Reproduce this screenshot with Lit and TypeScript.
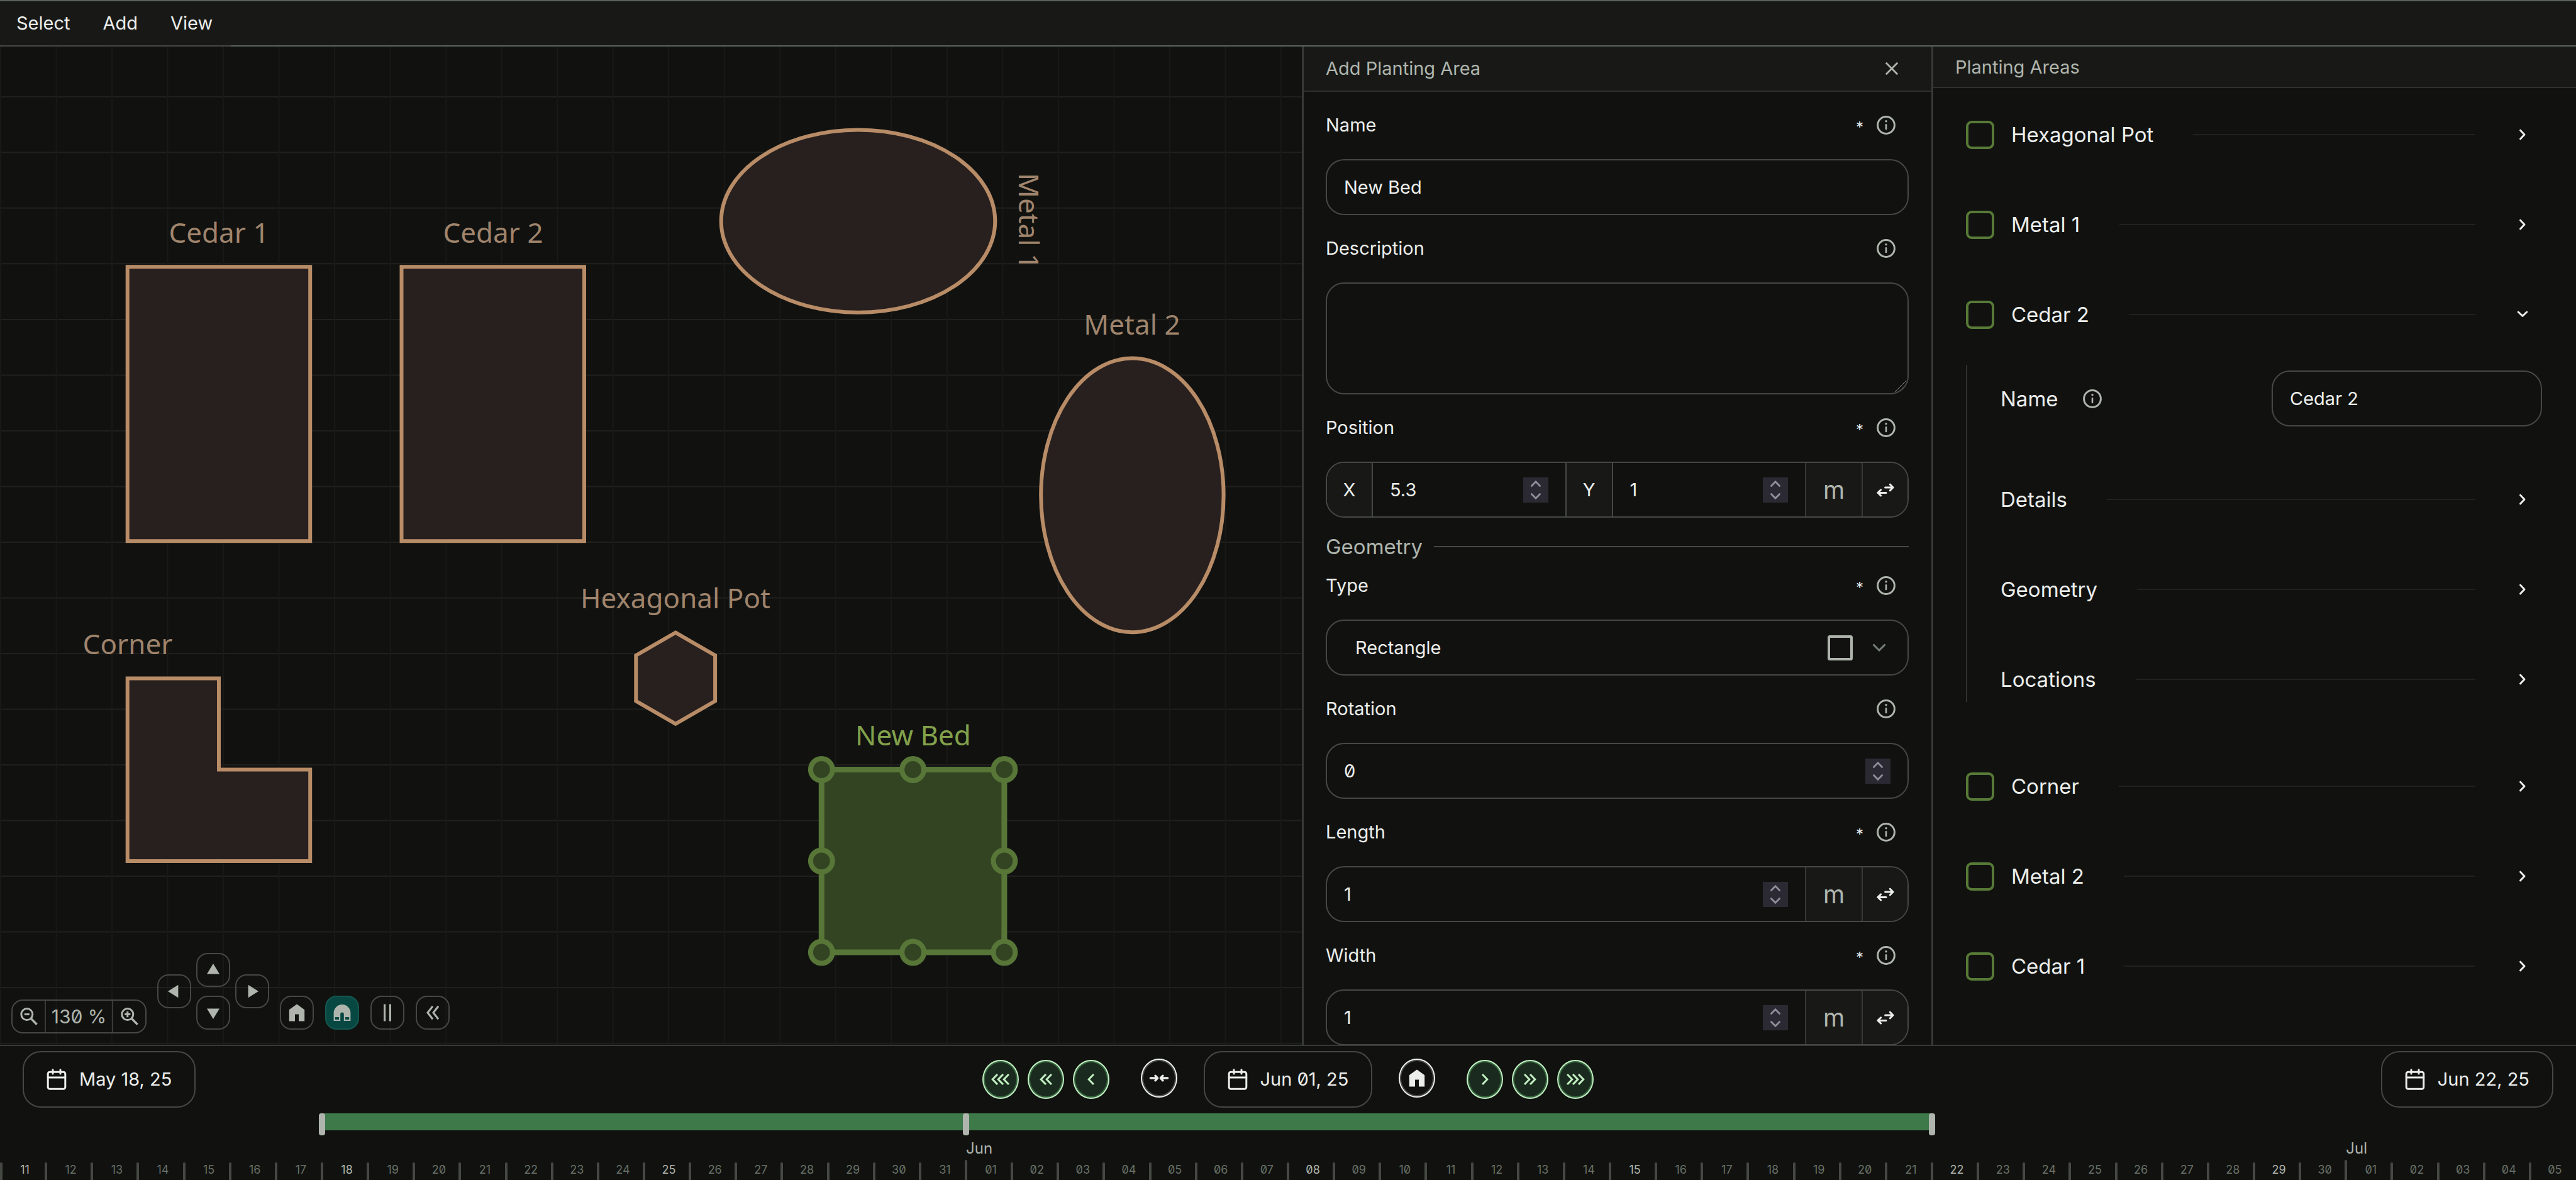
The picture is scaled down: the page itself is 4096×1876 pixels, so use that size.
import { LitElement, html, svg, css, nothing, type TemplateResult } from "lit";
import { customElement, state } from "lit/decorators.js";
import { classMap } from "lit/directives/class-map.js";

const TOTAL_DAYS = 56;
const FIRST_DAY = new Date(2025, 4, 11);
const GRID = 88.52;

/* ---------- icons ---------- */

const icon = (w: number, h: number, body: TemplateResult) => html`
  <svg class="icon" width=${w} height=${h} viewBox="0 0 ${w} ${h}" aria-hidden="true">${body}</svg>
`;

const infoIcon = icon(30, 30, svg`
  <circle cx="15" cy="15" r="13.4" fill="none" stroke="currentColor" stroke-width="3" />
  <circle cx="15" cy="8.8" r="1.7" fill="currentColor" />
  <path d="M15 14.4V21" stroke="currentColor" stroke-width="2.6" stroke-linecap="round" />
`);

const calendarIcon = icon(32, 34, svg`
  <g fill="none" stroke="currentColor" stroke-width="3" stroke-linecap="round">
    <rect x="2.2" y="5.2" width="27.6" height="27" rx="3" />
    <path d="M2.2 14H29.8M10 1.8V8M22 1.8V8" />
  </g>
`);

const homeIcon = icon(26, 28, svg`
  <path d="M13 .6L25.2 9.2V27.4H16V16.6H10V27.4H.8V9.2Z" fill="currentColor" />
`);

const magnetIcon = icon(28, 28, svg`
  <path fill="currentColor" fill-rule="evenodd"
    d="M.6 27V14.4A13.4 13.4 0 0 1 27.4 14.4V27H16.8V16.4A2.8 3 0 0 0 11.2 16.4V27Z
       M2.8 20.9V25H9V20.9ZM19 20.9V25H25.2V20.9Z" />
`);

const pauseIcon = icon(14, 28, svg`
  <path d="M1 .5H4.2V27.5H1ZM9.8 .5H13V27.5H9.8Z" fill="currentColor" />
`);

const collapseIcon = icon(22, 24, svg`
  <path d="M11 1.8L3 12L11 22.2M20 1.8L12 12L20 22.2" fill="none" stroke="currentColor" stroke-width="3" />
`);

const triangleIcons = {
  up: icon(22, 22, svg`<path d="M11 1L21 17.6H1Z" fill="currentColor" />`),
  down: icon(22, 22, svg`<path d="M1 4.4H21L11 21Z" fill="currentColor" />`),
  left: icon(22, 22, svg`<path d="M1 11L17.4 .8V21.2Z" fill="currentColor" />`),
  right: icon(22, 22, svg`<path d="M21 11L4.6 .8V21.2Z" fill="currentColor" />`),
};

const zoomIcon = (plus: boolean) => icon(28, 28, svg`
  <g fill="none" stroke="currentColor">
    <circle cx="10.8" cy="10.6" r="9" stroke-width="3" />
    <path d="M17 17L26.6 26.8" stroke-width="3.4" />
    <path d=${plus ? "M6.2 10.6H15.4M10.8 6V15.2" : "M6.8 10.6H14.8"} stroke-width="3" />
  </g>
`);

const chevronIcon = icon(36, 36, svg`
  <path d="M14.6 11.2L21 18L14.6 24.8" fill="none" stroke="currentColor" stroke-width="3" stroke-linecap="round" stroke-linejoin="round" />
`);

const chevronOpenIcon = icon(36, 36, svg`
  <path d="M11.2 14L18 20.4L24.8 14" fill="none" stroke="currentColor" stroke-width="3" stroke-linecap="round" stroke-linejoin="round" />
`);

const selectChevron = icon(22, 14, svg`
  <path d="M2.4 2.4L11 11L19.6 2.4" fill="none" stroke="#767d74" stroke-width="3" stroke-linecap="round" />
`);

const squareIcon = icon(40, 40, svg`
  <rect x="2" y="2" width="36" height="36" rx="1.5" fill="none" stroke="currentColor" stroke-width="4" />
`);

const closeIcon = icon(22, 22, svg`
  <path d="M1.8 1.8L20.2 20.2M20.2 1.8L1.8 20.2" fill="none" stroke="currentColor" stroke-width="2.8" />
`);

const swapIcon = icon(28, 22, svg`
  <g fill="none" stroke="currentColor" stroke-width="3" stroke-linecap="round" stroke-linejoin="round">
    <path d="M13.6 7H26M21.4 2.2L26 7L21.4 11.8" />
    <path d="M15 15.4H2M6.6 10.8L2 15.4L6.6 20" />
  </g>
`);

const shrinkIcon = icon(32, 14, svg`
  <g fill="none" stroke="currentColor" stroke-width="3.4" stroke-linecap="round" stroke-linejoin="round">
    <path d="M2.4 7H13.6M10 3.2L13.6 7L10 10.8" />
    <path d="M29.6 7H18.4M22 3.2L18.4 7L22 10.8" />
  </g>
`);

/** One to three stacked chevrons, used by the date stepping buttons. */
const stepIcon = (count: number, direction: "back" | "forward") => {
  const width = 11 + (count - 1) * 9;
  const paths = Array.from({ length: count }, (_, i) => {
    const x = i * 9;
    return direction === "back"
      ? svg`<path d="M${x + 10} 1L${x + 2.2} 9L${x + 10} 17" />`
      : svg`<path d="M${x + 1} 1L${x + 8.8} 9L${x + 1} 17" />`;
  });
  return icon(width, 18, svg`<g fill="none" stroke="currentColor" stroke-width="3">${paths}</g>`);
};

/* ---------- data ---------- */

interface AreaRow {
  id: string;
  name: string;
}

const AREAS: AreaRow[] = [
  { id: "hexagonal-pot", name: "Hexagonal Pot" },
  { id: "metal-1", name: "Metal 1" },
  { id: "cedar-2", name: "Cedar 2" },
  { id: "corner", name: "Corner" },
  { id: "metal-2", name: "Metal 2" },
  { id: "cedar-1", name: "Cedar 1" },
];

const DAYS = Array.from({ length: TOTAL_DAYS }, (_, i) => {
  const date = new Date(FIRST_DAY);
  date.setDate(FIRST_DAY.getDate() + i);
  const monthStart = date.getDate() === 1;
  return {
    index: i,
    label: String(date.getDate()).padStart(2, "0"),
    month: monthStart ? date.toLocaleString("en-US", { month: "short" }) : "",
    weekStart: date.getDay() === 0 && !monthStart,
  };
});

@customElement("app-root")
export class AppRoot extends LitElement {
  @state() private openArea = "cedar-2";

  static styles = css`
    :host {
      --bg: #111210;
      --bar: #181917;
      --line-faint: #212220;
      --line: #383a36;
      --line-strong: #454843;
      --muted: #afb5ad;
      --text: #eceeec;
      display: block;
      color: var(--text);
      background: var(--bg);
      font-family: Inter, "Liberation Sans", sans-serif;
      font-feature-settings: "zero";
      font-size: 29px;
      line-height: 36px;
    }
    * { box-sizing: border-box; }
    button, input, select, textarea {
      font: inherit;
      font-feature-settings: inherit;
      color: inherit;
      background: none;
      border: 0;
      margin: 0;
      padding: 0;
      outline: none;
      appearance: none;
      min-width: 0;
    }
    button { display: flex; align-items: center; justify-content: center; cursor: pointer; }
    h2, ul { margin: 0; padding: 0; font-weight: 400; font-size: inherit; list-style: none; }
    .icon { display: block; flex: none; }

    .app {
      display: grid;
      grid-template-rows: auto minmax(0, 1fr) auto;
      height: 100vh;
      overflow: hidden;
    }

    /* menu bar */
    .menubar { display: flex; height: 74px; background: var(--bar); border-top: 2px solid #5c625b; }
    .menus { display: flex; padding-right: 3px; border-bottom: 2px solid var(--line-strong); }
    .menus button { padding: 0 26px; }
    .menubar-rest { flex: 1; border-bottom: 2px solid #5c625b; }

    /* main columns */
    .main { display: grid; grid-template-columns: 2070fr 1001fr 1025fr; min-height: 0; }
    .canvas { position: relative; overflow: hidden; min-width: 0; }
    .scene { display: block; width: 100%; height: 100%; }
    .grid-x { stroke: #20211f; stroke-width: 2; }
    .grid-y { stroke: #191a18; stroke-width: 2; }
    .bed { fill: #28201e; stroke: #b88c67; stroke-width: 6; }
    .bed-label {
      font-family: "Noto Sans", sans-serif;
      font-size: 44px;
      fill: #b5957a;
      fill-opacity: 0.88;
      text-anchor: middle;
    }
    .draft { fill: #334423; stroke: #577637; stroke-width: 9; }
    .handle { fill: #334423; stroke: #577637; stroke-width: 8; }
    .draft-label { fill: #94b654; fill-opacity: 0.9; }

    .tools {
      position: absolute;
      left: 18px;
      bottom: 18px;
      display: flex;
      align-items: flex-end;
      gap: 17px;
      color: var(--muted);
    }
    .tool {
      width: 54px;
      height: 54px;
      border: 2px solid var(--line-strong);
      border-radius: 18px;
    }
    .zoom {
      display: flex;
      height: 54px;
      border: 2px solid var(--line-strong);
      border-radius: 18px;
      font-size: 30px;
    }
    .zoom button { width: 51px; }
    .zoom output {
      width: 109px;
      line-height: 50px;
      text-align: center;
      border: solid var(--line);
      border-width: 0 2px;
    }
    .pan { display: grid; grid-template-columns: repeat(3, 54px); gap: 14px 8px; padding-bottom: 6px; align-items: center; }
    .pan .up { grid-area: 1 / 2; }
    .pan .down { grid-area: 2 / 2; }
    .pan .left { grid-area: 1 / 1 / 3; }
    .pan .right { grid-area: 1 / 3 / 3; }
    .view-tools { display: flex; gap: 18px; padding-bottom: 6px; }
    .tool.on { background: #084843; border-color: #145750; }

    /* panels */
    .panel { border-left: 3px solid var(--line); overflow: hidden; min-width: 0; }
    .panel-head {
      display: flex;
      align-items: center;
      justify-content: space-between;
      height: 66px;
      padding: 2px 36px 0 35px;
      background: var(--bar);
      border-bottom: 2px solid #2f312e;
      color: var(--muted);
    }
    .panel-head.tall { height: 72px; padding-top: 0; }
    .close { width: 54px; height: 54px; }

    /* form */
    .form { display: flex; flex-direction: column; padding: 26px 36px 0 35px; }
    .field-head { display: flex; align-items: center; height: 54px; margin-bottom: 27px; }
    .field-head .name { flex: 1; }
    .required { font-size: 24px; padding: 8px 9px 0 0; }
    .info { width: 54px; height: 54px; color: var(--muted); }
    .field-head .info { margin-right: 9px; }
    .control {
      display: flex;
      align-items: center;
      height: 89px;
      margin-bottom: 26px;
      border: 2px solid var(--line-strong);
      border-radius: 29px;
      overflow: hidden;
    }
    .control input { flex: 1; height: 100%; padding: 0 27px; }
    .control.area { position: relative; height: 178px; }
    .control textarea { flex: 1; height: 100%; padding: 24px 27px; resize: none; }
    .grip { position: absolute; right: 1px; bottom: 1px; }
    .prefix {
      width: 73px;
      line-height: 85px;
      text-align: center;
      background: var(--bar);
      border-right: 2px solid var(--line-strong);
    }
    .prefix.inner { width: 76px; border-left: 2px solid var(--line-strong); }
    .unit {
      width: 90px;
      line-height: 85px;
      text-align: center;
      font-size: 39px;
      color: var(--muted);
      background: var(--bar);
      border-left: 2px solid var(--line);
    }
    .swap { width: 73px; height: 100%; background: var(--bar); border-left: 2px solid var(--line); }
    .spinner { display: flex; flex-direction: column; width: 40px; height: 40px; margin-right: 27px; background: #2b2a33; color: #8f8f9d; }
    .spinner button { flex: 1; }
    .picker { display: grid; align-items: center; }
    .picker select { grid-area: 1 / 1; height: 85px; padding-left: 45px; }
    .picker-icons {
      grid-area: 1 / 1;
      justify-self: end;
      display: flex;
      align-items: center;
      gap: 31px;
      padding-right: 34px;
      color: var(--muted);
      pointer-events: none;
    }
    .section {
      display: flex;
      align-items: center;
      gap: 18px;
      height: 36px;
      margin: 2px 0 17px;
      font-size: 33px;
      color: var(--muted);
    }
    .section::after { content: ""; flex: 1; height: 2px; background: var(--line-strong); }

    /* areas list */
    .areas { display: flex; flex-direction: column; gap: 71px; padding: 38px 54px 0 52px; font-size: 33px; }
    .row { display: flex; align-items: center; height: 72px; }
    .row input {
      width: 45px;
      height: 45px;
      margin-right: 27px;
      border: 4px solid #577a37;
      border-radius: 9px;
    }
    .row .rule { flex: 1; height: 2px; margin: 0 57px 0 63px; background: var(--line-faint); }
    .row button { padding-right: 13px; }
    .details {
      display: flex;
      flex-direction: column;
      gap: 71px;
      margin: 44px 0 27px;
      padding-left: 53px;
      border-left: 2px solid #2f312e;
    }
    .name-row { display: flex; align-items: center; height: 107px; }
    .name-row .info { margin: 0 auto 0 27px; }
    .name-row .control { width: 430px; margin: 0; font-size: 29px; }

    /* timeline */
    .timeline { border-top: 2px solid var(--line); padding-top: 8px; }
    .dates { display: grid; grid-template-columns: 1fr auto 1fr; align-items: center; padding: 0 36px; }
    .date { gap: 20px; height: 90px; padding: 0 36px; border: 2px solid var(--line-strong); border-radius: 29px; }
    .dates > :last-child { justify-self: end; }
    .dates > :first-child { justify-self: start; }
    .stepper { display: flex; align-items: center; gap: 42px; }
    .steps { display: flex; gap: 14px; }
    .steps:first-child { margin-right: 8px; }
    .steps:last-child { margin-left: 8px; }
    .round {
      width: 58px;
      height: 62px;
      border: 2px solid #c2f0c2;
      border-radius: 50%;
      box-shadow: inset 0 0 0 2px #366740;
      background: #1b2a1e;
      color: #c2f0c2;
    }
    .round.plain {
      margin-bottom: 4px;
      border-color: var(--text);
      box-shadow: inset 0 0 0 2px #454843;
      background: none;
      color: var(--text);
    }
    .track, .months, .days { display: grid; grid-template-columns: repeat(56, minmax(0, 1fr)); }
    .track { height: 35px; margin-top: 9px; }
    .range { grid-row: 1; height: 27px; background: #3e7949; }
    .knob { grid-row: 1; width: 10px; height: 35px; border-radius: 4px; background: var(--muted); transform: translateX(-50%); }
    .months { height: 39px; line-height: 41px; font-size: 24px; color: var(--muted); }
    .months span { grid-row: 1; white-space: nowrap; }
    .days { height: 32px; line-height: 32px; font-size: 18px; color: #687066; overflow: hidden; }
    .day { display: flex; align-items: flex-end; }
    .day::before {
      content: "";
      width: 4px;
      height: 28px;
      border-radius: 2px 2px 0 0;
      background: var(--line-strong);
      transform: translateX(-50%);
    }
    .day:first-child::before { transform: none; }
    .day.month-start::before { height: 32px; }
    .day span { flex: 1; padding-left: 2px; text-align: center; }
    .day.week-start { color: var(--muted); }
  `;

  /* ---------- canvas ---------- */

  private renderGrid() {
    const rows = Array.from({ length: 30 }, (_, i) => 79.8 + i * GRID);
    const cols = Array.from({ length: 60 }, (_, i) => 1 + i * GRID);
    return svg`
      ${rows.map((y) => svg`<line class="grid-x" x1="1" x2="100%" y1=${y} y2=${y} />`)}
      ${cols.map((x) => svg`<line class="grid-y" x1=${x} x2=${x} y1="0" y2="100%" />`)}
    `;
  }

  private renderScene() {
    const handles = [
      [1306.3, 1149.5], [1451.6, 1149.5], [1596.9, 1149.5],
      [1306.3, 1294.8], [1596.9, 1294.8],
      [1306.3, 1440], [1451.6, 1440], [1596.9, 1440],
    ];
    return html`
      <svg class="scene" role="img" aria-label="Garden plan">
        ${this.renderGrid()}
        <rect class="bed" x="202.7" y="350.2" width="290.5" height="436" />
        <text class="bed-label" x="348" y="312">Cedar 1</text>
        <rect class="bed" x="638.5" y="350.2" width="290.5" height="436" />
        <text class="bed-label" x="784" y="312">Cedar 2</text>
        <ellipse class="bed" cx="1364.5" cy="277.6" rx="217.8" ry="145.2" />
        <text class="bed-label" transform="translate(1620 277.6) rotate(90)">Metal 1</text>
        <ellipse class="bed" cx="1800.4" cy="713.4" rx="145.2" ry="217.8" />
        <text class="bed-label" x="1800" y="458">Metal 2</text>
        <path class="bed" d="M202.7 1004.4H348V1149.6H493.2V1294.9H202.7Z" />
        <text class="bed-label" x="203" y="966">Corner</text>
        <path class="bed" d="M1074.2 931.7L1137.1 968V1040.6L1074.2 1076.9L1011.3 1040.6V968Z" />
        <text class="bed-label" x="1074" y="893">Hexagonal Pot</text>
        <rect class="draft" x="1306.3" y="1149.5" width="290.6" height="290.5" />
        ${handles.map(([x, y]) => svg`<circle class="handle" cx=${x} cy=${y} r="17.4" />`)}
        <text class="bed-label draft-label" x="1452" y="1111">New Bed</text>
      </svg>
    `;
  }

  private renderTools() {
    return html`
      <div class="tools">
        <div class="zoom">
          <button aria-label="Zoom out">${zoomIcon(false)}</button>
          <output>130 %</output>
          <button aria-label="Zoom in">${zoomIcon(true)}</button>
        </div>
        <div class="pan">
          ${(["up", "left", "right", "down"] as const).map(
            (dir) => html`<button class="tool ${dir}" aria-label="Pan ${dir}">${triangleIcons[dir]}</button>`,
          )}
        </div>
        <div class="view-tools">
          <button class="tool" aria-label="Reset view">${homeIcon}</button>
          <button class="tool on" aria-label="Snap" aria-pressed="true">${magnetIcon}</button>
          <button class="tool" aria-label="Pause">${pauseIcon}</button>
          <button class="tool" aria-label="Collapse">${collapseIcon}</button>
        </div>
      </div>
    `;
  }

  /* ---------- form ---------- */

  private renderFieldHead(label: string, id: string, required = false) {
    return html`
      <div class="field-head">
        <label class="name" for=${id}>${label}</label>
        ${required ? html`<span class="required">*</span>` : nothing}
        <button class="info" type="button" aria-label="About ${label}">${infoIcon}</button>
      </div>
    `;
  }

  private renderSpinner() {
    return html`
      <span class="spinner">
        <button type="button" aria-label="Increase" tabindex="-1">
          ${icon(20, 12, svg`<path d="M3.4 9.6L10 2.8L16.6 9.6" fill="none" stroke="currentColor" stroke-width="2.8" stroke-linecap="round" />`)}
        </button>
        <button type="button" aria-label="Decrease" tabindex="-1">
          ${icon(20, 12, svg`<path d="M3.4 2.4L10 9.2L16.6 2.4" fill="none" stroke="currentColor" stroke-width="2.8" stroke-linecap="round" />`)}
        </button>
      </span>
    `;
  }

  private renderNumber(id: string, value: string, label?: string) {
    return html`
      <input id=${id} type="text" inputmode="decimal" .value=${value} aria-label=${label ?? nothing} />
      ${this.renderSpinner()}
    `;
  }

  private renderUnit() {
    return html`
      <span class="unit">m</span>
      <button class="swap" type="button" aria-label="Change unit">${swapIcon}</button>
    `;
  }

  private renderForm() {
    return html`
      <section class="panel">
        <div class="panel-head tall">
          <h2>Add Planting Area</h2>
          <button class="close" aria-label="Close">${closeIcon}</button>
        </div>
        <form class="form">
          ${this.renderFieldHead("Name", "name", true)}
          <div class="control"><input id="name" type="text" .value=${"New Bed"} /></div>

          ${this.renderFieldHead("Description", "description")}
          <div class="control area">
            <textarea id="description"></textarea>
            <svg class="grip" width="20" height="20" viewBox="0 0 20 20" aria-hidden="true">
              <path d="M1 19L19 1M7 19L19 7M13 19L19 13" stroke="#8f8f8f" stroke-width="1" />
            </svg>
          </div>

          ${this.renderFieldHead("Position", "position-x", true)}
          <div class="control">
            <span class="prefix">X</span>
            ${this.renderNumber("position-x", "5.3")}
            <span class="prefix inner">Y</span>
            ${this.renderNumber("position-y", "1", "Y position")}
            ${this.renderUnit()}
          </div>

          <div class="section">Geometry</div>

          ${this.renderFieldHead("Type", "type", true)}
          <div class="control picker">
            <select id="type"><option>Rectangle</option></select>
            <span class="picker-icons">${squareIcon}${selectChevron}</span>
          </div>

          ${this.renderFieldHead("Rotation", "rotation")}
          <div class="control">${this.renderNumber("rotation", "0")}</div>

          ${this.renderFieldHead("Length", "length", true)}
          <div class="control">${this.renderNumber("length", "1")}${this.renderUnit()}</div>

          ${this.renderFieldHead("Width", "width", true)}
          <div class="control">${this.renderNumber("width", "1")}${this.renderUnit()}</div>
        </form>
      </section>
    `;
  }

  /* ---------- areas ---------- */

  private renderDetails(area: AreaRow) {
    return html`
      <div class="details">
        <div class="name-row">
          <label for="area-name">Name</label>
          <button class="info" aria-label="About name">${infoIcon}</button>
          <div class="control"><input id="area-name" type="text" .value=${area.name} /></div>
        </div>
        ${["Details", "Geometry", "Locations"].map(
          (title) => html`
            <div class="row">
              <span>${title}</span><span class="rule"></span>
              <button aria-label="Expand ${title}">${chevronIcon}</button>
            </div>
          `,
        )}
      </div>
    `;
  }

  private renderAreas() {
    return html`
      <section class="panel">
        <div class="panel-head"><h2>Planting Areas</h2></div>
        <ul class="areas">
          ${AREAS.map((area) => {
            const open = area.id === this.openArea;
            return html`
              <li>
                <div class="row">
                  <input type="checkbox" id=${area.id} />
                  <label for=${area.id}>${area.name}</label>
                  <span class="rule"></span>
                  <button
                    aria-label="Toggle ${area.name}"
                    aria-expanded=${open}
                    @click=${() => (this.openArea = open ? "" : area.id)}
                  >
                    ${open ? chevronOpenIcon : chevronIcon}
                  </button>
                </div>
                ${open ? this.renderDetails(area) : nothing}
              </li>
            `;
          })}
        </ul>
      </section>
    `;
  }

  /* ---------- timeline ---------- */

  private renderDate(label: string) {
    return html`<button class="date">${calendarIcon}<span>${label}</span></button>`;
  }

  private renderTimeline() {
    return html`
      <footer class="timeline">
        <div class="dates">
          ${this.renderDate("May 18, 25")}
          <div class="stepper">
            <div class="steps">
              ${[3, 2, 1].map((n) => html`<button class="round" aria-label="Back ${n}">${stepIcon(n, "back")}</button>`)}
            </div>
            <button class="round plain" aria-label="Focus range">${shrinkIcon}</button>
            ${this.renderDate("Jun 01, 25")}
            <button class="round plain" aria-label="Today">${homeIcon}</button>
            <div class="steps">
              ${[1, 2, 3].map((n) => html`<button class="round" aria-label="Forward ${n}">${stepIcon(n, "forward")}</button>`)}
            </div>
          </div>
          ${this.renderDate("Jun 22, 25")}
        </div>
        <div class="track">
          <div class="range" style="grid-column: 8 / 43"></div>
          ${[8, 22, 43].map(
            (col) => html`<button class="knob" aria-label="Drag date" style="grid-column: ${col}"></button>`,
          )}
        </div>
        <div class="months">
          ${DAYS.filter((d) => d.month).map(
            (d) => html`<span style="grid-column: ${d.index + 1}">${d.month}</span>`,
          )}
        </div>
        <div class="days">
          ${DAYS.map(
            (d) => html`
              <div class=${classMap({ day: true, "week-start": d.weekStart, "month-start": d.month !== "" })}>
                <span>${d.label}</span>
              </div>
            `,
          )}
        </div>
      </footer>
    `;
  }

  render() {
    return html`
      <div class="app">
        <header class="menubar">
          <nav class="menus">
            <button>Select</button>
            <button>Add</button>
            <button>View</button>
          </nav>
          <div class="menubar-rest"></div>
        </header>
        <main class="main">
          <div class="canvas">${this.renderScene()}${this.renderTools()}</div>
          ${this.renderForm()}
          ${this.renderAreas()}
        </main>
        ${this.renderTimeline()}
      </div>
    `;
  }
}
